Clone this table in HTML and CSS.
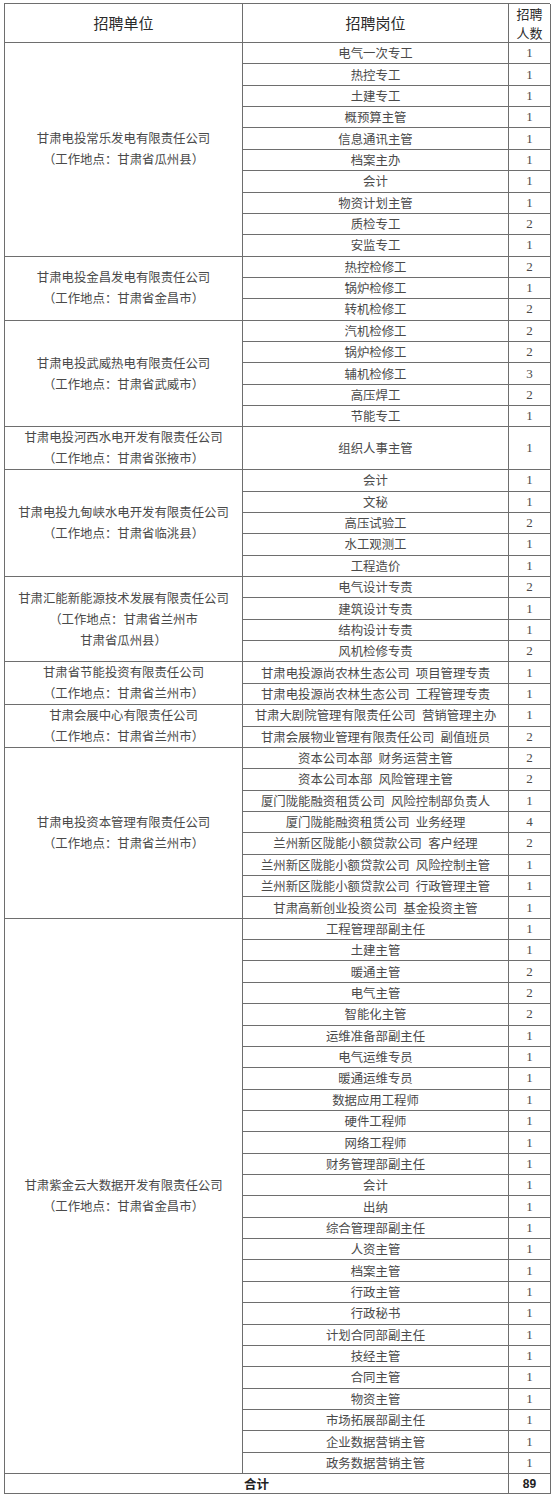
FILE: index.html
```html
<!DOCTYPE html>
<html lang="zh-CN">
<head>
<meta charset="utf-8">
<title>招聘岗位</title>
<link rel="stylesheet" href="styles.css">
</head>
<body>
<div class="page">
<div class="jobs" role="table">
<div class="hd" role="columnheader">招聘单位</div><div class="hd" role="columnheader">招聘岗位</div><div class="hd hd-num" role="columnheader">招聘<br>人数</div>

<div class="unit span10">甘肃电投常乐发电有限责任公司<br>（工作地点：甘肃省瓜州县）</div>
<div class="post">电气一次专工</div><div class="num">1</div>
<div class="post">热控专工</div><div class="num">1</div>
<div class="post">土建专工</div><div class="num">1</div>
<div class="post">概预算主管</div><div class="num">1</div>
<div class="post">信息通讯主管</div><div class="num">1</div>
<div class="post">档案主办</div><div class="num">1</div>
<div class="post">会计</div><div class="num">1</div>
<div class="post">物资计划主管</div><div class="num">1</div>
<div class="post">质检专工</div><div class="num">2</div>
<div class="post">安监专工</div><div class="num">1</div>

<div class="unit span3">甘肃电投金昌发电有限责任公司<br>（工作地点：甘肃省金昌市）</div>
<div class="post">热控检修工</div><div class="num">2</div>
<div class="post">锅炉检修工</div><div class="num">1</div>
<div class="post">转机检修工</div><div class="num">2</div>

<div class="unit span5">甘肃电投武威热电有限责任公司<br>（工作地点：甘肃省武威市）</div>
<div class="post">汽机检修工</div><div class="num">2</div>
<div class="post">锅炉检修工</div><div class="num">2</div>
<div class="post">辅机检修工</div><div class="num">3</div>
<div class="post">高压焊工</div><div class="num">2</div>
<div class="post">节能专工</div><div class="num">1</div>

<div class="unit span2">甘肃电投河西水电开发有限责任公司<br>（工作地点：甘肃省张掖市）</div>
<div class="post span2">组织人事主管</div><div class="num span2">1</div>

<div class="unit span5">甘肃电投九甸峡水电开发有限责任公司<br>（工作地点：甘肃省临洮县）</div>
<div class="post">会计</div><div class="num">1</div>
<div class="post">文秘</div><div class="num">1</div>
<div class="post">高压试验工</div><div class="num">2</div>
<div class="post">水工观测工</div><div class="num">1</div>
<div class="post">工程造价</div><div class="num">1</div>

<div class="unit span4">甘肃汇能新能源技术发展有限责任公司<br>（工作地点：甘肃省兰州市<br>甘肃省瓜州县）</div>
<div class="post">电气设计专责</div><div class="num">2</div>
<div class="post">建筑设计专责</div><div class="num">1</div>
<div class="post">结构设计专责</div><div class="num">1</div>
<div class="post">风机检修专责</div><div class="num">2</div>

<div class="unit span2">甘肃省节能投资有限责任公司<br>（工作地点：甘肃省兰州市）</div>
<div class="post">甘肃电投源尚农林生态公司&ensp;项目管理专责</div><div class="num">1</div>
<div class="post">甘肃电投源尚农林生态公司&ensp;工程管理专责</div><div class="num">1</div>

<div class="unit span2">甘肃会展中心有限责任公司<br>（工作地点：甘肃省兰州市）</div>
<div class="post">甘肃大剧院管理有限责任公司&ensp;营销管理主办</div><div class="num">1</div>
<div class="post">甘肃会展物业管理有限责任公司&ensp;副值班员</div><div class="num">2</div>

<div class="unit span8">甘肃电投资本管理有限责任公司<br>（工作地点：甘肃省兰州市）</div>
<div class="post">资本公司本部&ensp;财务运营主管</div><div class="num">2</div>
<div class="post">资本公司本部&ensp;风险管理主管</div><div class="num">2</div>
<div class="post">厦门陇能融资租赁公司&ensp;风险控制部负责人</div><div class="num">1</div>
<div class="post">厦门陇能融资租赁公司&ensp;业务经理</div><div class="num">4</div>
<div class="post">兰州新区陇能小额贷款公司&ensp;客户经理</div><div class="num">2</div>
<div class="post">兰州新区陇能小额贷款公司&ensp;风险控制主管</div><div class="num">1</div>
<div class="post">兰州新区陇能小额贷款公司&ensp;行政管理主管</div><div class="num">1</div>
<div class="post">甘肃高新创业投资公司&ensp;基金投资主管</div><div class="num">1</div>

<div class="unit span26">甘肃紫金云大数据开发有限责任公司<br>（工作地点：甘肃省金昌市）</div>
<div class="post">工程管理部副主任</div><div class="num">1</div>
<div class="post">土建主管</div><div class="num">1</div>
<div class="post">暖通主管</div><div class="num">2</div>
<div class="post">电气主管</div><div class="num">2</div>
<div class="post">智能化主管</div><div class="num">2</div>
<div class="post">运维准备部副主任</div><div class="num">1</div>
<div class="post">电气运维专员</div><div class="num">1</div>
<div class="post">暖通运维专员</div><div class="num">1</div>
<div class="post">数据应用工程师</div><div class="num">1</div>
<div class="post">硬件工程师</div><div class="num">1</div>
<div class="post">网络工程师</div><div class="num">1</div>
<div class="post">财务管理部副主任</div><div class="num">1</div>
<div class="post">会计</div><div class="num">1</div>
<div class="post">出纳</div><div class="num">1</div>
<div class="post">综合管理部副主任</div><div class="num">1</div>
<div class="post">人资主管</div><div class="num">1</div>
<div class="post">档案主管</div><div class="num">1</div>
<div class="post">行政主管</div><div class="num">1</div>
<div class="post">行政秘书</div><div class="num">1</div>
<div class="post">计划合同部副主任</div><div class="num">1</div>
<div class="post">技经主管</div><div class="num">1</div>
<div class="post">合同主管</div><div class="num">1</div>
<div class="post">物资主管</div><div class="num">1</div>
<div class="post">市场拓展部副主任</div><div class="num">1</div>
<div class="post">企业数据营销主管</div><div class="num">1</div>
<div class="post">政务数据营销主管</div><div class="num">1</div>

<div class="total-label">合计</div><div class="total-num">89</div>
</div>
</div>
</body>
</html>
```

FILE: styles.css
```css
html, body {
  margin: 0;
  padding: 0;
  background: #ffffff;
}

.page {
  padding: 3px 0 0 4px;
}

.jobs {
  display: grid;
  grid-template-columns: 238px 266px 42px;
  grid-template-rows: 39px repeat(67, 21.373px) 20px;
  width: 546px;
  box-sizing: border-box;
  border-top: 1px solid #6e6e6e;
  border-left: 1px solid #6e6e6e;
  font-family: "Noto Sans CJK SC", "Noto Sans", sans-serif;
  color: #4a4a4a;
}

.jobs > div {
  box-sizing: border-box;
  border-right: 1px solid #6e6e6e;
  border-bottom: 1px solid #6e6e6e;
  display: flex;
  align-items: center;
  justify-content: center;
  text-align: center;
  white-space: nowrap;
  overflow: hidden;
  min-width: 0;
  min-height: 0;
}

.hd {
  font-size: 15px;
  line-height: 20px;
  color: #2a2a2a;
}

.jobs > .hd-num {
  font-size: 13px;
  line-height: 19px;
  overflow: visible;
}

.unit {
  grid-column: 1;
  font-size: 12.4px;
  line-height: 21px;
}

.post {
  grid-column: 2;
  font-size: 12.4px;
  line-height: 16px;
}

.num {
  grid-column: 3;
  font-family: "Liberation Serif", "DejaVu Serif", serif;
  font-size: 13px;
  line-height: 16px;
}

.span2 { grid-row: span 2; }
.span3 { grid-row: span 3; }
.span4 { grid-row: span 4; }
.span5 { grid-row: span 5; }
.span8 { grid-row: span 8; }
.span10 { grid-row: span 10; }
.span26 { grid-row: span 26; }

.total-label {
  grid-column: 1 / span 2;
  font-size: 12.5px;
  font-weight: bold;
  line-height: 16px;
  color: #222222;
}

.total-num {
  grid-column: 3;
  font-family: "Liberation Sans", Arial, sans-serif;
  font-size: 12px;
  font-weight: bold;
  line-height: 16px;
  color: #222222;
}
```
